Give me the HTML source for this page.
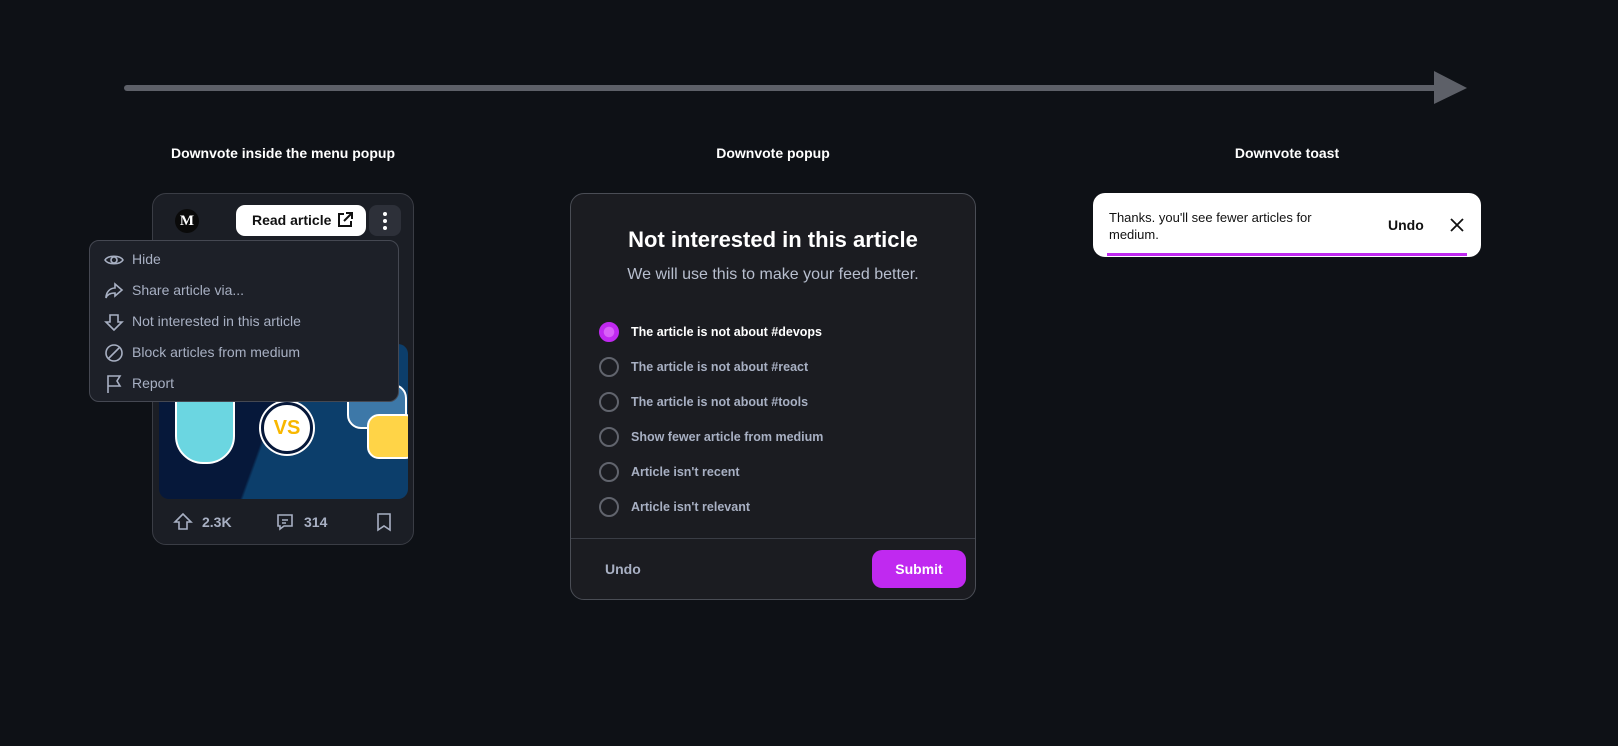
<!DOCTYPE html>
<html><head><meta charset="utf-8"><style>
*{box-sizing:border-box;margin:0;padding:0}
body{width:1618px;height:746px;background:#0e1116;font-family:"Liberation Sans",Arial,sans-serif;position:relative;overflow:hidden;color:#fff}
.abs{position:absolute}
.lbl{position:absolute;font-weight:bold;font-size:14px;color:#fff;text-align:center;width:400px}
.card{left:152px;top:193px;width:262px;height:352px;border:1px solid #3a3d45;border-radius:14px;background:#1b1e25}
.menu{left:89px;top:240px;width:310px;height:162px;border:1px solid #454852;border-radius:10px;background:#1d2028}
.mi{position:absolute;left:42px;font-size:14px;color:#a8b0c3}
.mic{position:absolute;left:14px}
.modal{left:570px;top:193px;width:406px;height:407px;border:1px solid #4a4d55;border-radius:14px;background:#1b1c21}
.opt{position:absolute;left:28px;height:20px;display:flex;align-items:center;font-size:12.5px;font-weight:bold;color:#a8b0c3}
.rad{width:20px;height:20px;border:2px solid #61646d;border-radius:50%;margin-right:12px}
</style></head><body>
<svg class="abs" style="left:120px;top:66px" width="350" height="1"></svg>
<svg class="abs" style="left:0;top:0" width="1618" height="140"><line x1="127" y1="88" x2="1440" y2="88" stroke="#5d6068" stroke-width="6" stroke-linecap="round"/><polygon points="1434,71 1467,88 1434,104" fill="#5d6068"/></svg>
<div class="lbl" style="left:83px;top:145px">Downvote inside the menu popup</div>
<div class="lbl" style="left:573px;top:145px">Downvote popup</div>
<div class="lbl" style="left:1087px;top:145px">Downvote toast</div>

<div class="abs card">
 <div class="abs" style="left:22px;top:15px;width:24px;height:24px;border-radius:50%;background:#0a0a0a;color:#fff;font-family:'Liberation Serif',serif;font-weight:bold;font-size:15px;text-align:center;line-height:24px">M</div>
 <div class="abs" style="left:83px;top:11px;width:130px;height:31px;border-radius:9px;background:#fff;color:#111;font-weight:bold;font-size:14px;line-height:31px;padding-left:16px">Read article
  <svg class="abs" style="left:100px;top:6px" width="18" height="18" viewBox="0 0 18 18" fill="none" stroke="#111" stroke-width="2"><path d="M8 3H3v12h12v-5M10 2h6v6M16 2L8 10"/></svg></div>
 <div class="abs" style="left:216px;top:11px;width:32px;height:31px;border-radius:8px;background:#2d3039">
  <div class="abs" style="left:14px;top:7px;width:4px;height:4px;border-radius:2px;background:#fff"></div>
  <div class="abs" style="left:14px;top:14px;width:4px;height:4px;border-radius:2px;background:#fff"></div>
  <div class="abs" style="left:14px;top:21px;width:4px;height:4px;border-radius:2px;background:#fff"></div></div>
 <div class="abs" style="left:6px;top:150px;width:249px;height:155px;border-radius:10px;background:linear-gradient(110deg,#06183a 0%,#06183a 45%,#0c3e6b 46%,#0c3e6b 100%);overflow:hidden">
  <div class="abs" style="left:16px;top:-10px;width:60px;height:130px;border-radius:28px;background:#6bd6e1;border:2px solid #fff"></div>
  <div class="abs" style="left:102px;top:58px;width:52px;height:52px;border-radius:50%;background:#fff;border:3px solid #06183a;box-shadow:0 0 0 2px #fff;color:#f8b700;font-weight:bold;font-size:20px;text-align:center;line-height:46px">VS</div>
  <div class="abs" style="left:188px;top:40px;width:60px;height:45px;border-radius:14px;background:#3d78a8;border:2px solid #fff"></div>
  <div class="abs" style="left:208px;top:70px;width:50px;height:45px;border-radius:12px;background:#ffd447;border:2px solid #fff"></div>
 </div>
 <svg class="abs" style="left:20px;top:318px" width="20" height="20" viewBox="0 0 20 20" fill="none" stroke="#a8b0c3" stroke-width="1.6"><path d="M10 2L2 10h4v7h8v-7h4z"/></svg>
 <div class="abs" style="left:49px;top:320px;font-size:14px;font-weight:bold;color:#a8b0c3">2.3K</div>
 <svg class="abs" style="left:122px;top:318px" width="20" height="20" viewBox="0 0 20 20" fill="none" stroke="#a8b0c3" stroke-width="1.6"><path d="M3 3h14v11h-8l-4 3v-3H3z M7 8h6M7 11h4"/></svg>
 <div class="abs" style="left:151px;top:320px;font-size:14px;font-weight:bold;color:#a8b0c3">314</div>
 <svg class="abs" style="left:222px;top:318px" width="18" height="20" viewBox="0 0 18 20" fill="none" stroke="#a8b0c3" stroke-width="1.6"><path d="M3 2h12v16l-6-4-6 4z"/></svg>
</div>

<div class="abs menu">
 <svg class="mic" style="top:9px" width="20" height="20" viewBox="0 0 20 20" fill="none" stroke="#a8b0c3" stroke-width="1.6"><path d="M1 10c3-5 15-5 18 0c-3 5-15 5-18 0z"/><circle cx="10" cy="10" r="3"/></svg>
 <div class="mi" style="top:10px">Hide</div>
 <svg class="mic" style="top:40px" width="20" height="20" viewBox="0 0 20 20" fill="none" stroke="#a8b0c3" stroke-width="1.6"><path d="M11 3l7 6-7 6v-3c-5 0-8 2-9 5 0-6 4-10 9-10z"/></svg>
 <div class="mi" style="top:41px">Share article via...</div>
 <svg class="mic" style="top:71px" width="20" height="20" viewBox="0 0 20 20" fill="none" stroke="#a8b0c3" stroke-width="1.6"><path d="M10 18L2 10h4V3h8v7h4z"/></svg>
 <div class="mi" style="top:72px">Not interested in this article</div>
 <svg class="mic" style="top:102px" width="20" height="20" viewBox="0 0 20 20" fill="none" stroke="#a8b0c3" stroke-width="1.6"><circle cx="10" cy="10" r="8"/><path d="M4.5 15.5l11-11"/></svg>
 <div class="mi" style="top:103px">Block articles from medium</div>
 <svg class="mic" style="top:133px" width="20" height="20" viewBox="0 0 20 20" fill="none" stroke="#a8b0c3" stroke-width="1.6"><path d="M4 19V2h12l-3 5 3 5H4"/></svg>
 <div class="mi" style="top:134px">Report</div>
</div>

<div class="abs modal">
 <div class="abs" style="left:0;width:404px;top:33px;text-align:center;font-size:22px;font-weight:bold;color:#fff">Not interested in this article</div>
 <div class="abs" style="left:0;width:404px;top:72px;text-align:center;font-size:16px;color:#b8bfcf">We will use this to make your feed better.</div>
 <div class="opt" style="top:128px;color:#fff"><div class="rad" style="border-color:#c029f0;background:radial-gradient(circle,#d960f8 0 5px,#c029f0 5.5px)"></div>The article is not about #devops</div>
 <div class="opt" style="top:163px"><div class="rad"></div>The article is not about #react</div>
 <div class="opt" style="top:198px"><div class="rad"></div>The article is not about #tools</div>
 <div class="opt" style="top:233px"><div class="rad"></div>Show fewer article from medium</div>
 <div class="opt" style="top:268px"><div class="rad"></div>Article isn't recent</div>
 <div class="opt" style="top:303px"><div class="rad"></div>Article isn't relevant</div>
 <div class="abs" style="left:0;top:344px;width:404px;height:1px;background:#3a3d45"></div>
 <div class="abs" style="left:34px;top:367px;font-size:14px;font-weight:bold;color:#a8b0c3">Undo</div>
 <div class="abs" style="left:301px;top:356px;width:94px;height:38px;border-radius:10px;background:#c029f0;color:#fff;font-size:14px;font-weight:bold;text-align:center;line-height:38px">Submit</div>
</div>

<div class="abs" style="left:1093px;top:193px;width:388px;height:64px;border-radius:12px;background:#fff;overflow:hidden">
 <div class="abs" style="left:16px;top:16px;width:240px;font-size:13px;line-height:17px;color:#111">Thanks. you'll see fewer articles for medium.</div>
 <div class="abs" style="left:295px;top:24px;font-size:14px;font-weight:bold;color:#111">Undo</div>
 <svg class="abs" style="left:357px;top:25px" width="14" height="14" viewBox="0 0 14 14" stroke="#111" stroke-width="1.8"><path d="M1 1l12 12M13 1L1 13"/></svg>
 <div class="abs" style="left:14px;top:60px;width:360px;height:3px;background:#c029f0"></div>
</div>
</body></html>
